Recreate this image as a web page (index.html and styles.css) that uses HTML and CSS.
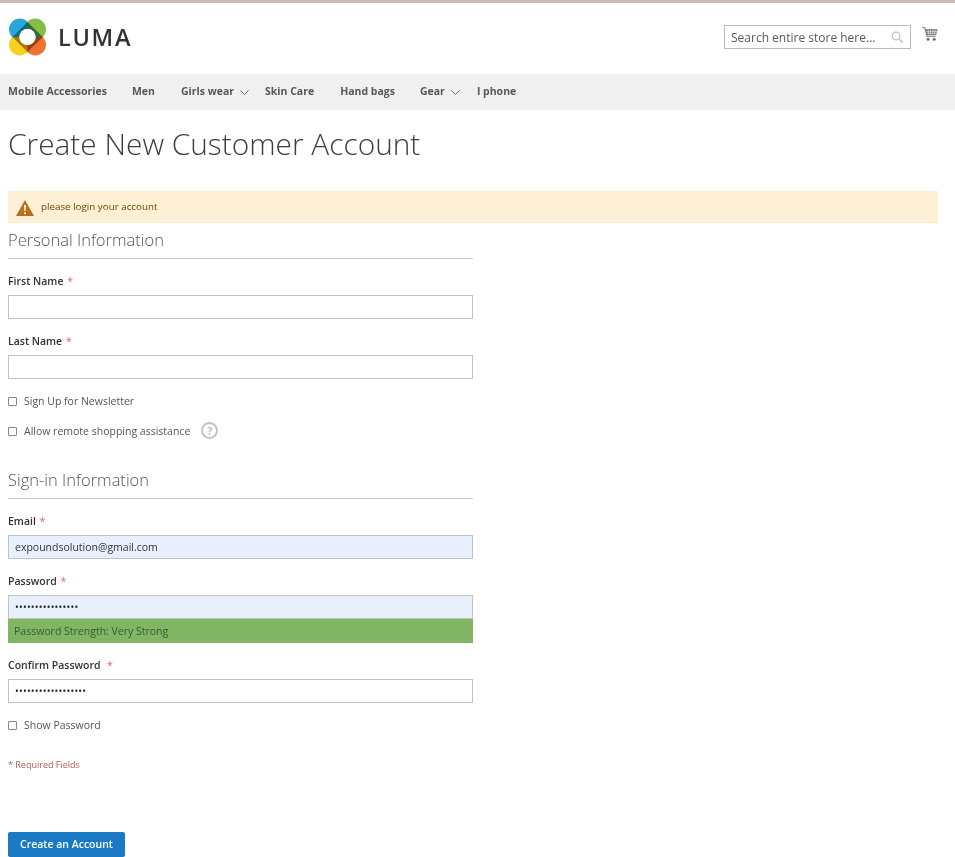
FILE: index.html
```html
<!DOCTYPE html>
<html lang="en">
<head>
<meta charset="utf-8">
<title>Create New Customer Account</title>
<link rel="stylesheet" href="styles.css">
</head>
<body>
<div class="topline"></div>
<header class="header">
  <a class="logo">
    <svg class="logo-mark" viewBox="0 0 38 38" width="37" height="38">
      <g class="logo-petals">
        <circle class="petal" cx="11" cy="11" r="11" fill="#2ba6dc"/>
        <circle class="petal" cx="27" cy="11" r="11" fill="#86bd45"/>
        <circle class="petal" cx="11" cy="27" r="11" fill="#f9d01f"/>
        <circle class="petal" cx="27" cy="27" r="11" fill="#f0702f"/>
      </g>
      <path d="M19 19V3.500L3.500 19z" fill="#0f6a78"/>
      <path d="M19 19V3.500L34.500 19z" fill="#2f6b2c"/>
      <path d="M19 19V34.500L3.500 19z" fill="#a87a12"/>
      <path d="M19 19V34.500L34.500 19z" fill="#93401a"/>
      <circle cx="19" cy="19" r="8.500" fill="#fff"/>
    </svg>
    <span class="logo-text">LUMA</span>
  </a>
  <div class="header-tools">
    <div class="search">
      <span class="search-text">Search entire store here...</span>
      <svg class="search-icon" viewBox="0 0 12 12" width="12" height="12"><circle cx="5" cy="5" r="3.800" fill="none" stroke="#bdbdbd" stroke-width="1.200"/><path d="M8 8l3.400 3.400" stroke="#bdbdbd" stroke-width="1.500"/></svg>
    </div>
    <svg class="cart" viewBox="0 0 17 16" width="16" height="16">
      <path d="M0.500 0.800L3 1.500l2.400 9h9.200" fill="none" stroke="#6f6f66" stroke-width="1.100"/>
      <path d="M3.800 3h12.700l-1.500 6H5.300z" fill="#6f6f66"/>
      <path d="M6.500 3.500l.6 5M9 3.500v5M11.500 3.500v5M14 3.500l-.6 5M4.500 5.300h11.500M5 7.200h10.500" stroke="#fff" stroke-width=".6"/>
      <circle cx="6.500" cy="13.500" r="1.600" fill="#6f6f66"/><circle cx="13" cy="13.500" r="1.600" fill="#6f6f66"/>
    </svg>
  </div>
</header>
<nav class="nav">
  <a class="nav-item nav-mobile">Mobile Accessories</a>
  <a class="nav-item nav-men">Men</a>
  <a class="nav-item nav-girls">Girls wear<svg class="chev" viewBox="0 0 9 5" width="9" height="5"><path d="M.5.500l4 4 4-4" fill="none" stroke="#666"/></svg></a>
  <a class="nav-item nav-skin">Skin Care</a>
  <a class="nav-item nav-bags">Hand bags</a>
  <a class="nav-item nav-gear">Gear<svg class="chev" viewBox="0 0 9 5" width="9" height="5"><path d="M.5.500l4 4 4-4" fill="none" stroke="#666"/></svg></a>
  <a class="nav-item">I phone</a>
</nav>
<main class="main">
  <h1 class="title">Create New Customer Account</h1>
  <div class="notice">
    <svg class="warn" viewBox="0 0 18 16" width="18" height="16"><path d="M9 0L18 16H0z" fill="#b5701a"/><path d="M8 5h2l-.3 6H8.300zM8 12.200h2v2H8z" fill="#fdf0d5"/></svg>
    <span class="notice-text">please login your account</span>
  </div>
  <form class="form">
    <section class="fieldset fieldset-personal">
      <h2 class="legend">Personal Information</h2>
      <div class="field">
        <label class="label">First Name <em class="star">*</em></label>
        <input class="input" type="text">
      </div>
      <div class="field">
        <label class="label">Last Name <em class="star">*</em></label>
        <input class="input" type="text">
      </div>
      <label class="check check-first"><input type="checkbox" class="box"><span>Sign Up for Newsletter</span></label>
      <label class="check"><input type="checkbox" class="box"><span>Allow remote shopping assistance</span><span class="help">?</span></label>
    </section>
    <section class="fieldset">
      <h2 class="legend">Sign-in Information</h2>
      <div class="field">
        <label class="label">Email <em class="star">*</em></label>
        <input class="input filled" type="text" value="expoundsolution@gmail.com">
      </div>
      <div class="field">
        <label class="label">Password <em class="star">*</em></label>
        <input class="input filled dots" type="text" value="••••••••••••••••">
        <div class="strength">Password Strength: Very Strong</div>
      </div>
      <div class="field field-confirm">
        <label class="label">Confirm Password&nbsp; <em class="star">*</em></label>
        <input class="input dots" type="text" value="••••••••••••••••••">
      </div>
      <label class="check check-first"><input type="checkbox" class="box"><span>Show Password</span></label>
    </section>
    <p class="required">* Required Fields</p>
    <button class="submit" type="button">Create an Account</button>
  </form>
</main>
</body>
</html>
```
FILE: styles.css
```css
* { box-sizing: border-box; }
html, body { margin: 0; padding: 0; }
body {
  font-family: "Open Sans", sans-serif;
  font-size: 11px;
  color: #333;
  background: #fff;
  height: 857px;
  overflow: hidden;
}
.topline { height: 3px; background: #cbbab5; }
.header {
  height: 71px;
  display: flex;
  justify-content: space-between;
  padding: 15px 17px 0 9px;
}
.logo { display: flex; align-items: flex-start; gap: 12px; height: 40px; }
.logo-mark { display: block; }
.logo-petals { isolation: isolate; }
.petal { mix-blend-mode: multiply; }
.logo-text {
  font-size: 23.500px;
  line-height: 38px;
  letter-spacing: 1.700px;
  color: #333;
  font-weight: 600;
}
.header-tools { display: flex; align-items: flex-start; gap: 11px; }
.search {
  width: 187px;
  height: 24px;
  margin-top: 7px;
  border: 1px solid #bbb;
  display: flex;
  align-items: center;
  justify-content: space-between;
  padding: 0 7px 0 6px;
}
.search-text { font-size: 12px; color: #575757; white-space: nowrap; }
.cart { margin-top: 8px; }
.nav {
  height: 36px;
  background: #f0f0f0;
  display: flex;
  align-items: center;
  padding: 0 0 2px 8px;
  font-size: 10.500px;
  font-weight: 700;
  color: #575757;
}
.nav-item { display: flex; align-items: center; white-space: nowrap; }
.nav-mobile { margin-right: 25px; }
.nav-men { margin-right: 26px; }
.nav-girls { margin-right: 16px; }
.nav-skin { margin-right: 26px; }
.nav-bags { margin-right: 25px; }
.nav-gear { margin-right: 17px; }
.chev { margin-left: 6px; margin-top: 2px; }
.main { padding: 0 17px 0 8px; }
.title {
  font-size: 29.850px;
  font-weight: 300;
  line-height: 40px;
  margin: 14px 0 27px;
  color: #3d3d3d;
}
.notice {
  height: 32px;
  background: #fdf0d5;
  display: flex;
  align-items: center;
  padding-left: 8px;
  gap: 7px;
  font-size: 9.800px;
  color: #6f4400;
}
.notice-text { margin-bottom: 2px; }
.warn { margin-top: 2px; }
.form { width: 465px; }
.legend {
  margin: 0;
  height: 36px;
  font-size: 16.500px;
  font-weight: 300;
  line-height: 34px;
  color: #555;
  border-bottom: 1px solid #c6c6c6;
}
.field { margin-top: 14px; }
.label { display: block; height: 22px; line-height: 17px; font-size: 10.500px; font-weight: 600; color: #333; }
.star { font-style: normal; color: #e5635f; font-weight: 400; margin-left: 1px; }
.input {
  display: block;
  width: 100%;
  height: 24px;
  border: 1px solid #c2c2c2;
  background: #fff;
  padding: 0 7px 0 6px;
  font-family: "Open Sans", sans-serif;
  font-size: 10.500px;
  color: #333;
  outline: none;
  border-radius: 0;
}
.filled { background: #e8f0fe; }
.dots { letter-spacing: 0.200px; font-size: 10px; color: #222; }
.strength {
  height: 24px;
  background: #80b564;
  color: #3a5a30;
  font-size: 10.500px;
  line-height: 24px;
  padding-left: 6px;
}
.check {
  display: flex;
  align-items: center;
  height: 20px;
  margin-top: 10px;
  font-size: 10.500px;
  color: #555;
}
.check-first { margin-top: 12px; }
.box {
  appearance: none;
  width: 9px;
  height: 9px;
  margin: 1px 7px 0 0;
  border: 1px solid #888;
  border-radius: 1px;
  background: #fff;
  flex: none;
}
.help {
  width: 17px;
  height: 17px;
  margin-left: 11px;
  margin-top: -2px;
  border: 2px solid #c4c4c4;
  border-radius: 50%;
  color: #bbb;
  font-size: 11px;
  font-weight: 700;
  text-align: center;
  line-height: 13px;
}
.fieldset-personal { padding-bottom: 22px; }
.required { margin: 22px 0 0; font-size: 9px; line-height: 16px; color: #b8565c; }
.submit {
  display: block;
  width: 117px;
  height: 25px;
  margin-top: 59px;
  border: 0;
  border-radius: 2px;
  background: #1979c3;
  color: #fff;
  font-family: "Open Sans", sans-serif;
  font-size: 10.500px;
  font-weight: 600;
  padding: 0 0 2px;
}
```
